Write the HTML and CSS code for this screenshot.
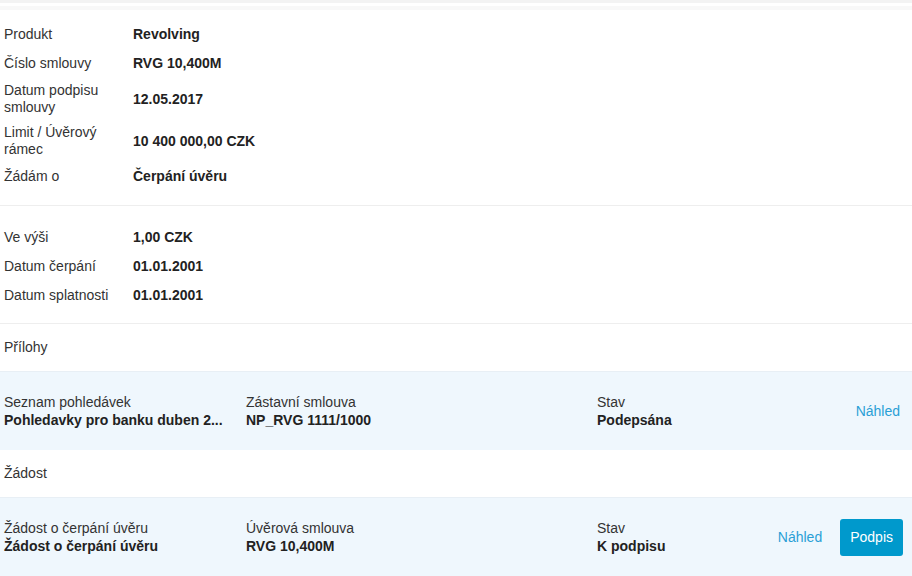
FILE: index.html
```html
<!DOCTYPE html>
<html lang="cs">
  <head>
    <meta charset="UTF-8" />
    <meta name="viewport" content="width=device-width, initial-scale=1.0" />
    <title>Čerpání úvěru</title>
    <link rel="stylesheet" href="styles.css">
  </head>
  <body>
    <div class="top-strip"></div>

    <div class="detail">
      <div class="section">
        <div class="row"><div class="label">Produkt</div><div class="value">Revolving</div></div>
        <div class="row"><div class="label">Číslo smlouvy</div><div class="value">RVG 10,400M</div></div>
        <div class="row"><div class="label">Datum podpisu smlouvy</div><div class="value">12.05.2017</div></div>
        <div class="row"><div class="label">Limit / Úvěrový rámec</div><div class="value">10 400 000,00 CZK</div></div>
        <div class="row"><div class="label">Žádám o</div><div class="value">Čerpání úvěru</div></div>
      </div>

      <div class="section">
        <div class="row"><div class="label">Ve výši</div><div class="value">1,00 CZK</div></div>
        <div class="row"><div class="label">Datum čerpání</div><div class="value">01.01.2001</div></div>
        <div class="row"><div class="label">Datum splatnosti</div><div class="value">01.01.2001</div></div>
      </div>

      <div class="group-title">Přílohy</div>
      <div class="doc">
        <div class="doc-cell">
          <div class="doc-label">Seznam pohledávek</div>
          <div class="doc-value" title="Pohledavky pro banku duben 2017.xlsx">Pohledavky pro banku duben 2...</div>
        </div>
        <div class="doc-cell">
          <div class="doc-label">Zástavní smlouva</div>
          <div class="doc-value">NP_RVG 1111/1000</div>
        </div>
        <div class="doc-cell">
          <div class="doc-label">Stav</div>
          <div class="doc-value">Podepsána</div>
        </div>
        <div class="doc-actions">
          <a class="link" href="#">Náhled</a>
        </div>
      </div>

      <div class="group-title">Žádost</div>
      <div class="doc">
        <div class="doc-cell">
          <div class="doc-label">Žádost o čerpání úvěru</div>
          <div class="doc-value">Žádost o čerpání úvěru</div>
        </div>
        <div class="doc-cell">
          <div class="doc-label">Úvěrová smlouva</div>
          <div class="doc-value">RVG 10,400M</div>
        </div>
        <div class="doc-cell">
          <div class="doc-label">Stav</div>
          <div class="doc-value">K podpisu</div>
        </div>
        <div class="doc-actions">
          <a class="link" href="#">Náhled</a>
          <button class="btn-primary">Podpis</button>
        </div>
      </div>
    </div>
  </body>
</html>
```

FILE: styles.css
```css
body {
  margin: 0;
  font-family: "Liberation Sans", Arial, sans-serif;
  font-size: 14px;
  color: #333;
  background-color: #fff;
}

.top-strip {
  height: 3px;
  background-color: #f3f3f3;
  border-bottom: 3px solid #fff;
  box-shadow: 0 4px 0 #f8f8f8;
}

.detail {
  padding-top: 14px;
}

.section {
  padding: 0 0 14px;
  border-bottom: 1px solid #eeeeee;
}

.section + .section {
  padding-top: 17px;
  padding-bottom: 13px;
}

.row {
  display: flex;
  align-items: center;
  min-height: 29px;
  padding: 4px 0;
  box-sizing: border-box;
}

.label {
  width: 112px;
  padding: 0 17px 0 4px;
  line-height: 17px;
  flex-shrink: 0;
}

.value {
  font-weight: bold;
  color: #222;
  line-height: 17px;
}

.group-title {
  height: 47px;
  line-height: 47px;
  padding-left: 4px;
}

.doc {
  display: grid;
  grid-template-columns: 242px 351px 1fr auto;
  align-items: center;
  height: 79px;
  padding: 0 9px 0 4px;
  background-color: #eff7fd;
  border-top: 1px solid #e8eff5;
  box-sizing: border-box;
}

.doc-cell {
  min-width: 0;
  padding-right: 12px;
}

.doc-label {
  line-height: 18px;
}

.doc-value {
  font-weight: bold;
  color: #222;
  line-height: 18px;
  white-space: nowrap;
}

.doc-actions {
  display: flex;
  align-items: center;
  gap: 15px;
}

.link {
  color: #2a9fd6;
  text-decoration: none;
  margin-right: 3px;
}

.btn-primary {
  font-family: inherit;
  font-size: 14px;
  color: #fff;
  background-color: #0099cc;
  border: 0;
  border-radius: 3px;
  height: 37px;
  padding: 0 10px;
  cursor: pointer;
}
```
